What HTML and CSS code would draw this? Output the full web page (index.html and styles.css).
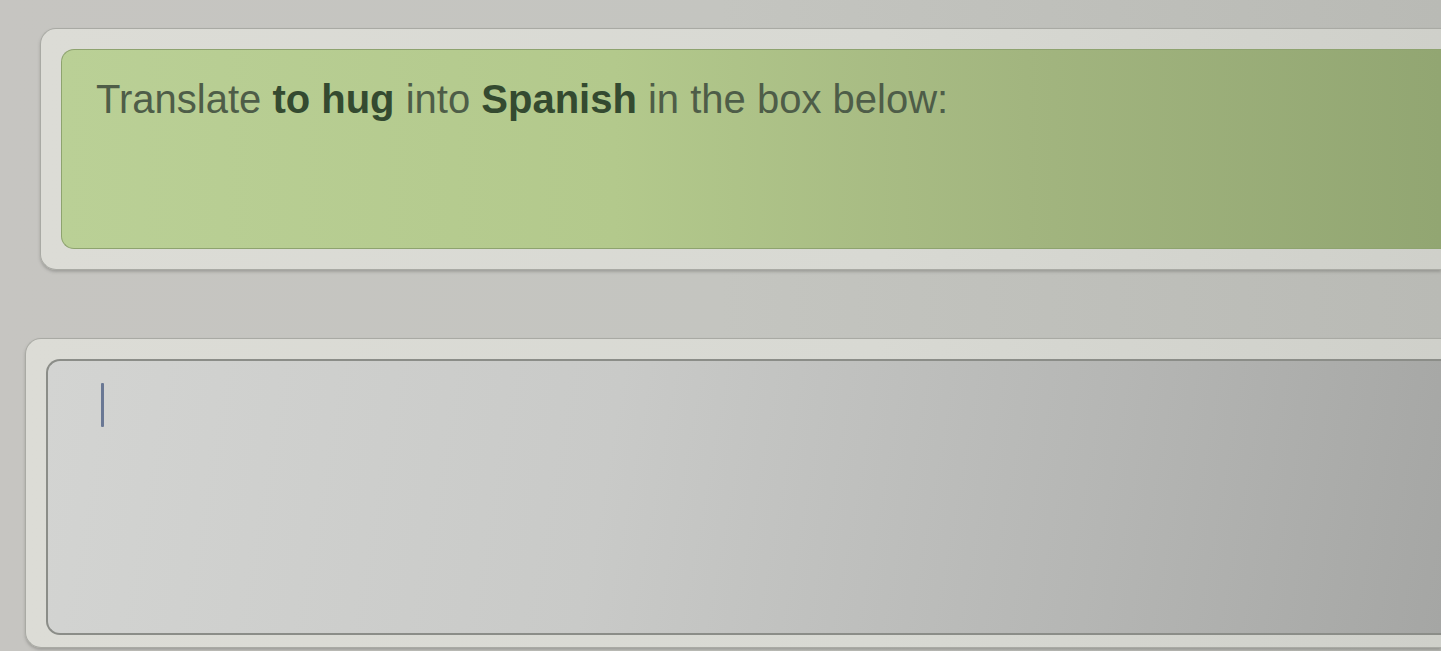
FILE: index.html
```html
<!DOCTYPE html>
<html>
<head>
<meta charset="utf-8">
<link rel="stylesheet" href="styles.css">
</head>
<body>
<div class="page">
  <div class="card card-prompt">
    <div class="prompt">
      <p class="prompt-text">Translate <b>to hug</b> into <b>Spanish</b> in the box below:</p>
    </div>
  </div>
  <div class="card card-answer">
    <div class="answer">
      <span class="caret"></span>
    </div>
  </div>
</div>
</body>
</html>
```

FILE: styles.css
```css
html, body {
  margin: 0;
  padding: 0;
  height: 100%;
  overflow: hidden;
}
body {
  background: linear-gradient(90deg, #c6c5c1 0%, #c4c5c0 50%, #b9bab5 100%);
  font-family: "Liberation Sans", Arial, sans-serif;
}
.page {
  display: flex;
  flex-direction: column;
  padding-top: 28px;
}
.card {
  background: linear-gradient(90deg, #dcdcd6 0%, #d8d9d3 60%, #cfd0ca 100%);
  border: 1px solid #a9aaa4;
  border-right: none;
  border-radius: 16px 0 0 16px;
  box-shadow: 0 2px 3px rgba(90, 90, 85, 0.35);
}
.card-prompt {
  margin-left: 40px;
  padding: 20px 0 20px 20px;
}
.prompt {
  height: 200px;
  box-sizing: border-box;
  background: linear-gradient(90deg, #bad096 0%, #b3c98c 40%, #a2b57f 70%, #92a672 100%);
  border: 1px solid #8ea36f;
  border-right: none;
  border-radius: 13px 0 0 13px;
  padding: 26px 0 0 34px;
}
.prompt-text {
  margin: 0;
  font-size: 40px;
  line-height: 46px;
  color: #4e5d48;
}
.prompt-text b {
  color: #344a30;
  font-weight: 700;
}
.card-answer {
  margin-top: 68px;
  margin-left: 25px;
  padding: 20px 0 12px 20px;
}
.answer {
  position: relative;
  height: 272px;
  background: linear-gradient(100deg, #d3d4d2 0%, #c9cac8 40%, #b5b6b4 75%, #a5a6a4 100%);
  border: 2px solid #8b8d88;
  border-right: none;
  border-radius: 14px 0 0 14px;
}
.caret {
  position: absolute;
  left: 53px;
  top: 22px;
  width: 3px;
  height: 44px;
  background: #6a7894;
  border-radius: 1px;
}
```
